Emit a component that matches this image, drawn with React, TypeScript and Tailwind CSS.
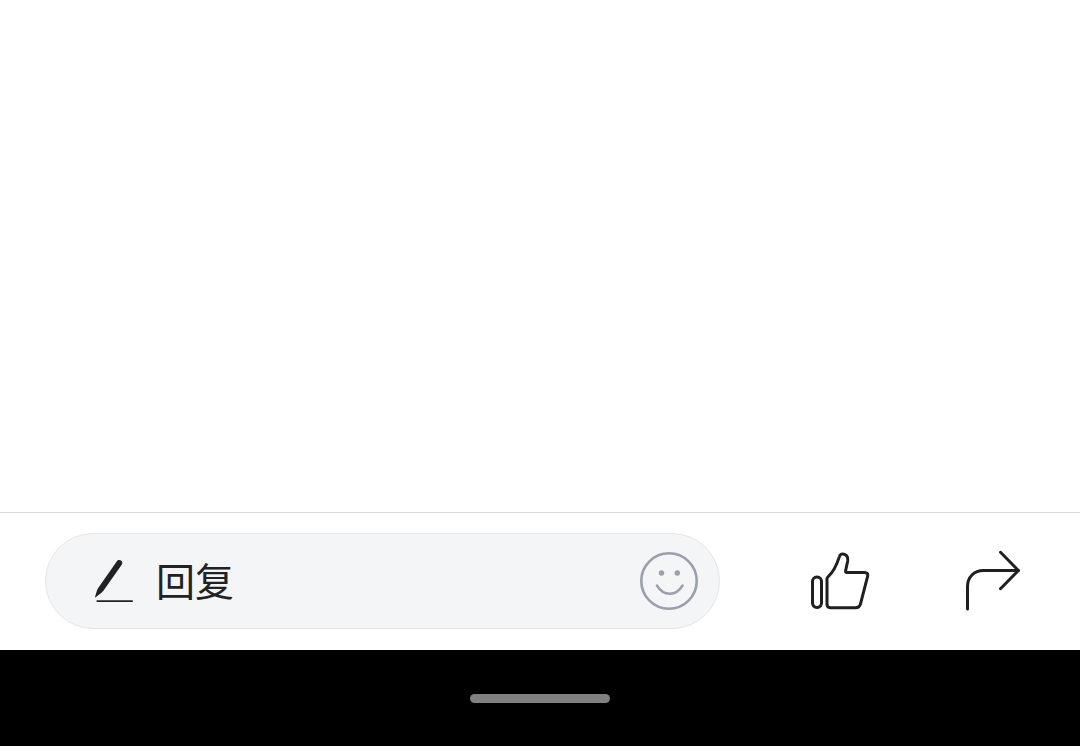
import type { ReactNode } from 'react';

const PencilIcon = () => (
  <svg className="h-12 w-10 shrink-0" viewBox="0 0 40 48" fill="none" aria-hidden="true">
    <path
      d="M22.7 4.4 C23.8 2.8 25.6 2.5 27 3.5 C28.5 4.5 28.7 6.2 27.7 7.8 L9.6 33.4 C8.4 35 6.8 36.3 4.9 37.7 L1.7 40.2 C1.2 40.6 0.9 40.4 1.1 39.8 L2.4 35.2 C2.8 33.6 3.3 32.3 4.2 31 Z"
      fill="#222222"
    />
    <path d="M2.6 44.1 H38.8" stroke="#222222" strokeWidth="1.7" />
  </svg>
);

const SmileIcon = () => (
  <svg className="h-[60px] w-[60px]" viewBox="0 0 60 60" fill="none" aria-hidden="true">
    <circle cx="30" cy="30" r="27.7" stroke="#999fac" strokeWidth="2.6" />
    <circle cx="22.5" cy="22" r="2.7" fill="#999fac" />
    <circle cx="38.3" cy="22" r="2.7" fill="#999fac" />
    <path d="M18 34.6 C24.5 45.4 37 45.4 43.5 34.6" stroke="#999fac" strokeWidth="2.6" strokeLinecap="round" />
  </svg>
);

const ThumbIcon = () => (
  <svg
    className="h-16 w-16"
    viewBox="0 0 64 64"
    fill="none"
    stroke="#202020"
    strokeWidth="3"
    strokeLinejoin="round"
    aria-hidden="true"
  >
    <rect x="4.5" y="28" width="9" height="30.4" rx="4.3" />
    <path d="M19 29.6 C19 28.8 19.3 28.4 20 27.8 C25.5 23 29 15 31.4 7.6 C32.1 5.2 34.4 4.3 36.6 5.3 C39.4 6.5 40.2 8.8 39.7 12 L37.6 21.8 C37.4 23 37.7 23.6 38.9 23.6 H56.6 C59.2 23.6 60.2 24.9 59.6 27.3 L52.5 54.8 C51.8 57.6 50.4 58.7 47.6 58.7 H22.4 C20 58.7 19 57.7 19 55.3 Z" />
  </svg>
);

const ShareIcon = () => (
  <svg
    className="h-16 w-16"
    viewBox="0 0 64 64"
    fill="none"
    stroke="#202020"
    strokeWidth="3"
    strokeLinecap="round"
    strokeLinejoin="round"
    aria-hidden="true"
  >
    <path d="M7.5 60 V37.5 C7.5 28 14 21.5 23.5 21.5 H58.4" />
    <path d="M40.5 3.3 L58.4 21.5 L40.5 39.7" />
  </svg>
);

const IconButton = ({ label, children }: { label: string; children: ReactNode }) => (
  <button type="button" aria-label={label} className="shrink-0 cursor-pointer">
    {children}
  </button>
);

const ReplyBar = () => (
  <footer className="flex items-center gap-[88px] border-t border-[#d8d9da] bg-white pt-5 pr-14 pb-[21px] pl-[45px]">
    <div className="flex h-24 min-w-0 flex-1 items-center rounded-full border border-[#e5e6e8] bg-[#f3f5f7] pr-5 pl-12">
      <PencilIcon />
      <input
        type="text"
        aria-label="回复"
        placeholder="回复"
        className="ml-[22px] h-16 min-w-0 flex-1 bg-transparent pb-1 font-['Noto_Sans_CJK_SC',sans-serif] text-[39px] text-[#222222] outline-none placeholder:text-[#222222]"
      />
      <IconButton label="表情">
        <SmileIcon />
      </IconButton>
    </div>

    <IconButton label="点赞">
      <ThumbIcon />
    </IconButton>
    <IconButton label="分享">
      <ShareIcon />
    </IconButton>
  </footer>
);

const App = () => {
  return (
    <div className="flex min-h-screen flex-col bg-white">
      <main className="flex-1" />
      <ReplyBar />

      {/* System gesture bar */}
      <div className="flex h-24 items-center justify-center bg-black">
        <div className="h-[9px] w-[140px] rounded-full bg-[#808080]" />
      </div>
    </div>
  );
};

export default App;
